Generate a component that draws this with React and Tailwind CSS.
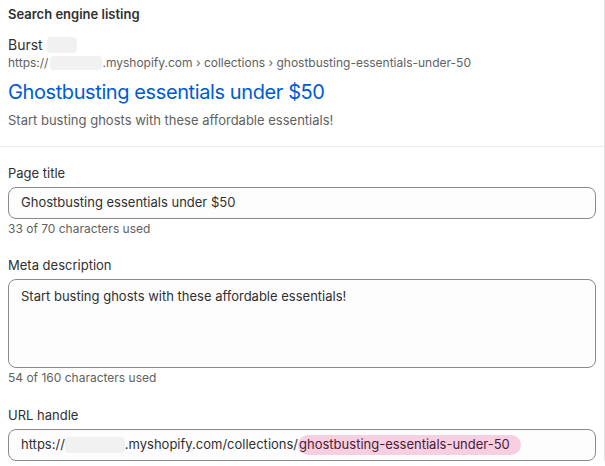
const font = { fontFamily: "Inter, 'Noto Sans', sans-serif" };

function Blur({ className }) {
  return <span className={`inline-block rounded-sm bg-[#f1f1f1] align-middle ${className}`} />;
}

function Field({ label, help, className, children }) {
  return (
    <div className={`px-2 ${className}`}>
      <div className="text-[13px] leading-5 text-[#303030]">{label}</div>
      <div className="mt-1">{children}</div>
      {help && <div className="mt-0.5 text-[12px] leading-4 text-[#616161]">{help}</div>}
    </div>
  );
}

export default function App() {
  return (
    <div className="min-h-[466px] w-[605px] bg-white text-[#303030]" style={font}>
      <div className="border-r border-[#e3e3e3]">
        <div className="border-b border-[#ebebeb] px-2 pb-4 pt-1">
          <h2 className="text-[13px] font-semibold leading-5">Search engine listing</h2>
          <div className="mt-3 flex items-center text-[14px] leading-[18px]">
            Burst <Blur className="ml-1 h-4 w-[30px]" />
          </div>
          <div className="flex items-center text-[12px] leading-[18px] text-[#616161]">
            https://<Blur className="ml-0.5 h-3.5 w-[52px]" />.myshopify.com › collections ›
            ghostbusting-essentials-under-50
          </div>
          <div className="mt-2 text-[20px] leading-6 tracking-[-0.4px] text-[#005bd3]">
            Ghostbusting essentials under $50
          </div>
          <div className="mt-1.5 text-[13px] leading-5 text-[#616161]">
            Start busting ghosts with these affordable essentials!
          </div>
        </div>

        <div className="pt-4">
          <Field label="Page title" help="33 of 70 characters used">
            <div className="flex h-8 items-center rounded-lg border border-[#8a8a8a] bg-[#fdfdfd] px-3 text-[13px]">
              Ghostbusting essentials under $50
            </div>
          </Field>
          <Field className="mt-[18px]" label="Meta description" help="54 of 160 characters used">
            <div className="h-[89px] rounded-lg border border-[#8a8a8a] bg-[#fdfdfd] px-3 py-1.5 text-[13px] leading-5">
              Start busting ghosts with these affordable essentials!
            </div>
          </Field>
          <Field className="mt-[19px]" label="URL handle">
            <div className="flex h-8 items-center rounded-lg border border-[#8a8a8a] bg-[#fdfdfd] px-3 text-[13px]">
              https://<Blur className="h-4 w-[60px]" />.myshopify.com/collections/
              <span className="rounded-full bg-[#f7cfe0] pl-px pr-[11px] text-[#4a2238]">
                ghostbusting-essentials-under-50
              </span>
            </div>
          </Field>
        </div>
      </div>
    </div>
  );
}
